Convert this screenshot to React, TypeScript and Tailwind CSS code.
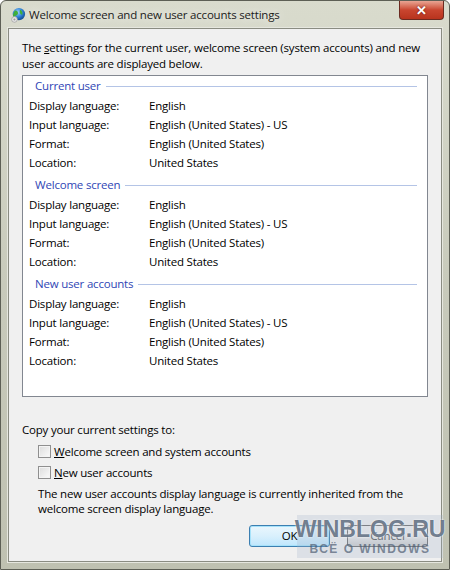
import React from 'react';

const sections = [
  { title: 'Current user' },
  { title: 'Welcome screen' },
  { title: 'New user accounts' },
];

const rows = [
  ['Display language:', 'English'],
  ['Input language:', 'English (United States) - US'],
  ['Format:', 'English (United States)'],
  ['Location:', 'United States'],
];

function GlobeIcon() {
  return (
    <svg width="16" height="16" viewBox="0 0 18 18">
      <defs>
        <radialGradient id="g" cx="40%" cy="35%" r="65%">
          <stop offset="0%" stopColor="#9fd3ff" />
          <stop offset="60%" stopColor="#2a7fd4" />
          <stop offset="100%" stopColor="#124c91" />
        </radialGradient>
      </defs>
      <circle cx="10" cy="8" r="7" fill="url(#g)" />
      <path d="M6 4c2 0 3 1 3 3s-2 2-3 3-1 2-2 2c-.5-1-1-3 0-5s1-3 2-3z" fill="#3fae3a" />
      <path d="M12 3c1 1 2 2 2 4s-1 2-2 1-1-2-1-3 0-2 1-2z" fill="#3fae3a" />
      <circle cx="5" cy="14" r="3.2" fill="#e8e8e8" stroke="#9a9a9a" strokeWidth="0.8" />
      <circle cx="5" cy="14" r="1.2" fill="#9a9a9a" />
    </svg>
  );
}

function Checkbox({ label, accel }: { label: string; accel: string }) {
  return (
    <div className="flex items-center h-[21px] pl-[16px]">
      <span className="w-[13px] h-[13px] border border-[#8f8f8f] bg-gradient-to-br from-[#dcdcdc] to-[#fbfbfb] shadow-[inset_0_0_0_1px_#f4f4f4] mr-[3px]" />
      <span>
        <span className="underline">{accel}</span>
        {label}
      </span>
    </div>
  );
}

export default function App() {
  return (
    <div
      className="w-[450px] h-[570px] flex flex-col bg-gradient-to-b from-[#d9dbcd] via-[#c8cabb] to-[#bfc1b1] border border-[#5d5f55] rounded-t-[6px] text-[11.5px] tracking-[-0.2px] text-black"
      style={{ fontFamily: '"Open Sans", "Noto Sans", sans-serif' }}
    >
      {/* Title bar */}
      <div className="relative h-[27px] flex items-center pl-[9px] shrink-0">
        <GlobeIcon />
        <span className="ml-[3px] text-[#1b1b1b] [text-shadow:0_0_8px_#ffffff]">
          Welcome screen and new user accounts settings
        </span>
        <div className="absolute right-[5px] top-0 w-[45px] h-[19px] rounded-b-[4px] border border-t-0 border-[#6b2a20] bg-gradient-to-b from-[#e8a493] via-[#c9452f] to-[#b8331d] flex items-center justify-center">
          <span className="text-white font-bold text-[13px] leading-none [text-shadow:0_0_2px_#5a1208]">
            ✕
          </span>
        </div>
      </div>

      {/* Client area */}
      <div className="flex-1 mx-[7px] mb-[7px] bg-[#f0f0f0] border border-[#8a8c82] shadow-[0_0_0_1px_#e6e7df] px-[13px] pt-[11px] flex flex-col relative">
        <p className="leading-[16px]">
          The <span className="underline">s</span>ettings for the current user, welcome screen (system accounts) and new user accounts are displayed below.
        </p>

        <div className="mt-[3px] h-[322px] bg-white border border-[#828790] pl-[6px] pr-[10px] pt-[1px]">
          {sections.map((s) => (
            <div key={s.title} className="mb-[4px]">
              <div className="flex items-center h-[18px] pl-[6px]">
                <span className="text-[#2f46b5]">{s.title}</span>
                <span className="flex-1 h-px bg-[#b4c4e6] ml-[5px]" />
              </div>
              <div className="pt-[1px]">
                {rows.map(([k, v]) => (
                  <div key={k} className="flex h-[19px] items-center">
                    <span className="w-[120px]">{k}</span>
                    <span>{v}</span>
                  </div>
                ))}
              </div>
            </div>
          ))}
        </div>

        <p className="mt-[25px] leading-[16px]">Copy your current settings to:</p>
        <div className="mt-[3px]">
          <Checkbox accel="W" label="elcome screen and system accounts" />
          <Checkbox accel="N" label="ew user accounts" />
        </div>
        <p className="pl-[16px] leading-[15px] mt-[3px]">
          The new user accounts display language is currently inherited from the welcome screen display language.
        </p>

        <div className="flex justify-end gap-[17px] mt-[9px]">
          <button className="w-[81px] h-[22px] rounded-[3px] border border-[#3c7fb1] bg-gradient-to-b from-[#eaf6fd] via-[#d9f0fc] to-[#bee6fd] shadow-[inset_0_0_0_1px_#a6e2fa]">
            OK
          </button>
          <button className="w-[81px] h-[22px] rounded-[3px] border border-[#707070] bg-gradient-to-b from-[#f2f2f2] via-[#ebebeb] to-[#cfcfcf] text-[#555]">
            Cancel
          </button>
        </div>

        {/* watermark */}
        <div
          className="absolute -right-[2px] bottom-[3px] w-[146px] h-[43px] bg-[#9fb1c6]/25 flex flex-col items-center justify-center leading-none tracking-normal"
          style={{ fontFamily: '"Liberation Sans", Arial, sans-serif' }}
        >
          <span className="text-[23px] font-bold text-[#4d5d72]/80 [text-shadow:0_0_2px_#ffffff]">
            WINBLOG.RU
          </span>
          <span className="text-[12px] font-bold tracking-[1.5px] text-[#4d5d72]/70 mt-[2px]">
            ВСЁ О WINDOWS
          </span>
        </div>
      </div>
    </div>
  );
}
